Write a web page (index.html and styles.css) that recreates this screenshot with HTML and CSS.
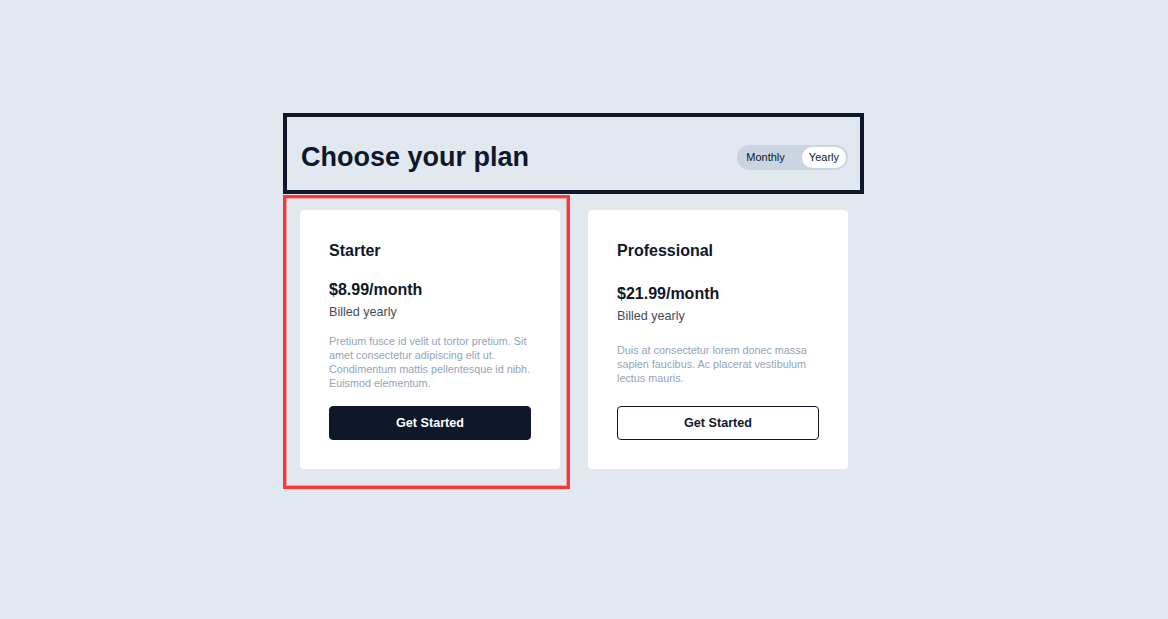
FILE: index.html
```html
<!DOCTYPE html>
<html lang="en">
<head>
<meta charset="utf-8">
<title>Choose your plan</title>
<link rel="stylesheet" href="styles.css">
</head>
<body>
<main class="page">
  <header class="header">
    <h1 class="heading">Choose your plan</h1>
    <div class="toggle">
      <button class="toggle-btn">Monthly</button>
      <button class="toggle-btn active">Yearly</button>
    </div>
  </header>
  <section class="plans">
    <div class="cell cell-selected">
      <article class="card">
        <h2 class="title">Starter</h2>
        <div class="body">
          <div class="price-block">
            <div class="price">$8.99/month</div>
            <div class="billed">Billed yearly</div>
          </div>
          <p class="desc">Pretium fusce id velit ut tortor pretium. Sit amet consectetur adipiscing elit ut. Condimentum mattis pellentesque id nibh. Euismod elementum.</p>
        </div>
        <button class="cta cta-dark">Get Started</button>
      </article>
    </div>
    <div class="cell cell-plain">
      <article class="card">
        <h2 class="title">Professional</h2>
        <div class="body">
          <div class="price-block">
            <div class="price">$21.99/month</div>
            <div class="billed">Billed yearly</div>
          </div>
          <p class="desc">Duis at consectetur lorem donec massa sapien faucibus. Ac placerat vestibulum lectus mauris.</p>
        </div>
        <button class="cta cta-light">Get Started</button>
      </article>
    </div>
  </section>
</main>
</body>
</html>
```

FILE: styles.css
```css
* { box-sizing: border-box; }

html, body {
  margin: 0;
  padding: 0;
}

body {
  background: #e2e8f0;
  font-family: "Liberation Sans", Arial, sans-serif;
  color: #0f172a;
  width: 1168px;
  height: 619px;
  overflow: hidden;
}

.page {
  width: 581px;
  margin-left: 283px;
  padding-top: 113px;
}

.header {
  height: 81px;
  border: 4px solid #0f172a;
  padding: 7px 12px 0 14px;
  display: flex;
  align-items: center;
  justify-content: space-between;
}

.heading {
  margin: 0;
  font-size: 27px;
  line-height: 31px;
  font-weight: 700;
  color: #0f172a;
}

.toggle {
  display: flex;
  gap: 10px;
  padding: 2px;
  background: #cbd5e1;
  border-radius: 999px;
}

.toggle-btn {
  border: 0;
  background: transparent;
  font-family: "Liberation Sans", Arial, sans-serif;
  font-size: 11px;
  line-height: 21px;
  height: 21px;
  padding: 0 7px;
  color: #0f172a;
  border-radius: 999px;
  cursor: pointer;
}

.toggle-btn.active {
  background: #ffffff;
}

.plans {
  margin-top: 1px;
  display: grid;
  grid-template-columns: 287px 294px;
}

.cell {
  display: flex;
}

.cell-selected {
  border: 3px solid #ff3535;
  box-shadow: inset 0 0 0 1px rgba(255, 80, 80, 0.45);
  padding: 12px 7px 17px 14px;
}

.cell-plain {
  padding: 15px 16px 20px 18px;
}

.card {
  width: 260px;
  flex: 1 0 auto;
  background: #ffffff;
  border-radius: 4px;
  padding: 29px 29px 29px 29px;
  display: flex;
  flex-direction: column;
}

.title {
  margin: 0;
  font-size: 16px;
  line-height: 24px;
  font-weight: 700;
  color: #0f172a;
}

.body {
  flex: 1 0 auto;
  display: flex;
  flex-direction: column;
  justify-content: space-evenly;
}

.price-block {
  margin-top: 14.5px;
}

.price {
  font-size: 16px;
  line-height: 24px;
  font-weight: 700;
  color: #0f172a;
}

.billed {
  font-size: 12.6px;
  line-height: 19px;
  padding-top: 1px;
  color: #3f4b5e;
}

.desc {
  margin: 12.5px 0 0 0;
  font-size: 10.8px;
  line-height: 14px;
  color: #94a3b8;
}

.cta {
  margin-top: 16px;
  width: 100%;
  height: 34px;
  border-radius: 4px;
  border: 1px solid #0f172a;
  font-family: "Liberation Sans", Arial, sans-serif;
  font-size: 12.6px;
  font-weight: 700;
  cursor: pointer;
}

.cta-dark {
  background: #0f172a;
  color: #ffffff;
}

.cta-light {
  background: #ffffff;
  color: #0f172a;
}
```
